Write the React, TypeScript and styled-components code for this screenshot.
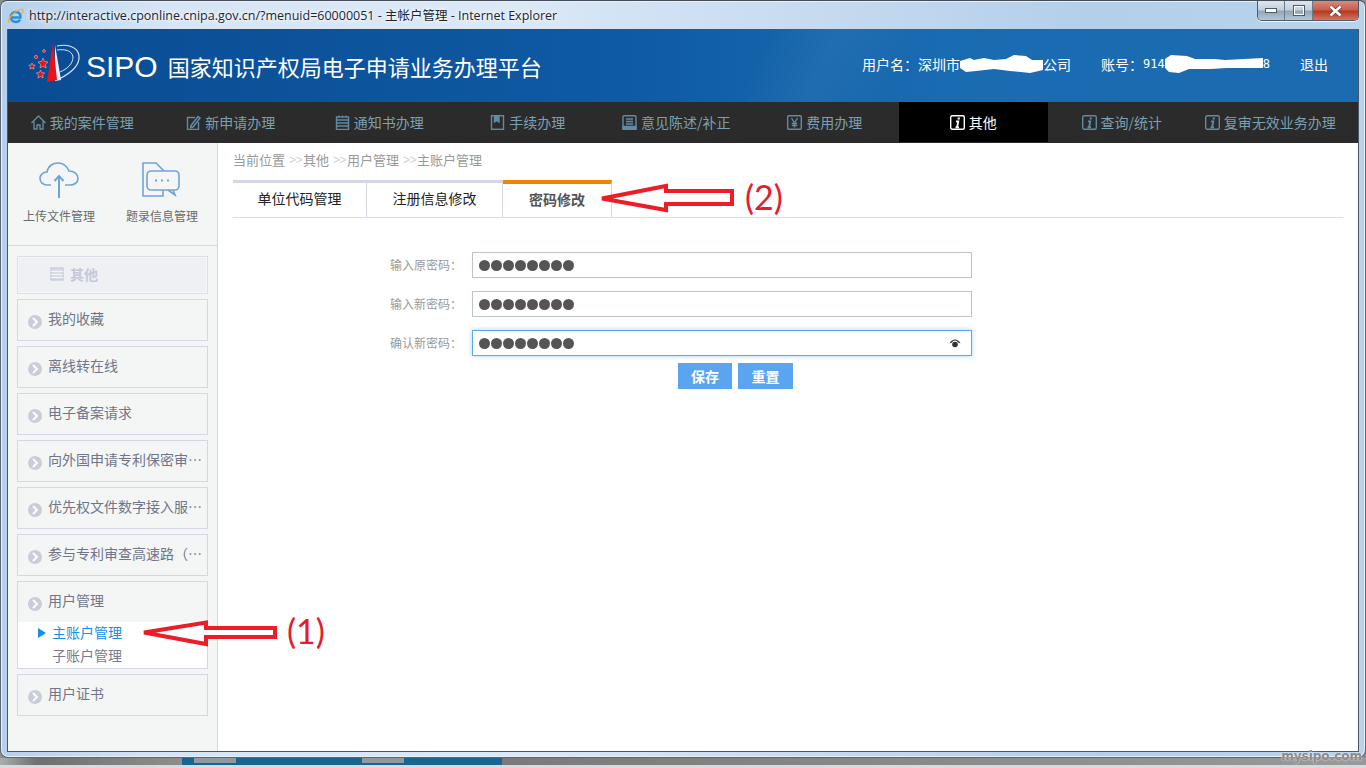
import styled, { createGlobalStyle } from 'styled-components'

const cjk = `"Noto Sans CJK SC", "Liberation Sans", sans-serif`

const GlobalStyle = createGlobalStyle`
    html, body {
        margin: 0;
        padding: 0;
        width: 1366px;
        height: 768px;
        overflow: hidden;
        font-family: ${cjk};
    }
    * {
        box-sizing: border-box;
    }
`

const Page = styled.div`
    position: relative;
    width: 1366px;
    height: 768px;
    overflow: hidden;
    display: flex;
    flex-direction: column;
    background: #8d8d8d;
`

const Window = styled.div`
    width: 1366px;
    height: 758px;
    display: flex;
    flex-direction: column;
    padding: 0 6px 5px 6px;
    border: 1px solid #5d6670;
    border-top: 1px solid #444d57;
    border-radius: 7px 7px 8px 8px;
    box-shadow: inset 0 0 0 1px #e8f1fa;
    background: linear-gradient(90deg, #b5d0ec 0%, #d6e5f5 12%, #dbe8f6 38%, #c6daf0 60%, #b3cfea 80%, #b9d3ec 100%);
`

const TitleBar = styled.div`
    height: 28px;
    flex: none;
    display: flex;
    align-items: flex-start;
`

const TitleText = styled.span`
    margin-left: 5px;
    margin-top: 6px;
    font-family: "Open Sans", "Noto Sans CJK SC", sans-serif;
    font-size: 12.5px;
    line-height: 18px;
    color: #1c2530;
    white-space: nowrap;
    text-shadow: 0 0 6px #fff, 0 0 3px #fff;
`

const IeIcon = styled.svg`
    width: 17px;
    height: 17px;
    margin-top: 7px;
    flex: none;
`

const Controls = styled.div`
    margin-left: auto;
    width: 102px;
    height: 20px;
    display: flex;
    border: 1px solid #4e5a68;
    border-top: none;
    border-radius: 0 0 5px 5px;
    overflow: hidden;
    box-shadow: 0 1px 0 #eef4fb;
`

const ControlButton = styled.div<{ $close?: boolean; $wide: number }>`
    width: ${(p) => p.$wide}px;
    display: flex;
    align-items: center;
    justify-content: center;
    border-right: 1px solid #6d7a88;
    background: ${(p) =>
        p.$close
            ? 'linear-gradient(180deg, #d98a7c 0%, #c6604e 45%, #b93a22 55%, #d3765f 100%)'
            : 'linear-gradient(180deg, #dde6f0 0%, #c3d0de 45%, #94a6b8 55%, #b4c5d6 100%)'};
    &:last-child {
        border-right: none;
    }
`

const Client = styled.div`
    flex: 1;
    min-height: 0;
    display: flex;
    flex-direction: column;
    border: 1px solid #4b5560;
    border-top: none;
    background: #fff;
`

const Header = styled.header`
    height: 73px;
    flex: none;
    display: flex;
    align-items: center;
    padding: 2px 30px 0 20px;
    color: #fff;
    background:
        linear-gradient(115deg, rgba(255, 255, 255, 0) 55%, rgba(255, 255, 255, 0.05) 60%, rgba(255, 255, 255, 0) 66%),
        linear-gradient(90deg, #0a4c93 0%, #0e5aa3 45%, #1a6cb2 70%, #1c6aaf 100%);
`

const Logo = styled.svg`
    width: 54px;
    height: 44px;
    flex: none;
    margin-top: -4px;
`

const Brand = styled.span`
    margin-left: 4px;
    font-family: "Liberation Sans", sans-serif;
    font-size: 30px;
    line-height: 36px;
`

const SiteName = styled.span`
    margin: 0 0 2px 10px;
    font-size: 22px;
    line-height: 34px;
    white-space: nowrap;
`

const UserInfo = styled.div`
    margin-left: auto;
    display: flex;
    align-items: center;
    gap: 30px;
    font-size: 14px;
    margin-top: -6px;
`

const InfoItem = styled.span`
    display: flex;
    align-items: center;
    white-space: nowrap;
`

const Mono = styled.span`
    font-family: "DejaVu Sans Mono", "Liberation Mono", monospace;
    font-size: 12px;
`

const Redact = styled.svg<{ $w: number }>`
    width: ${(p) => p.$w}px;
    height: 20px;
    flex: none;
`

const Nav = styled.nav`
    height: 41px;
    flex: none;
    display: grid;
    grid-template-columns: repeat(9, 148.5px);
    background: #2b2b2b;
`

const NavItem = styled.div<{ $active?: boolean }>`
    display: flex;
    align-items: center;
    justify-content: center;
    gap: 4px;
    height: 40px;
    font-size: 14px;
    white-space: nowrap;
    color: ${(p) => (p.$active ? '#fff' : '#7ba0b2')};
    background: ${(p) => (p.$active ? '#000' : 'transparent')};
    svg {
        width: 15px;
        height: 15px;
        flex: none;
    }
`

const Body = styled.div`
    flex: 1;
    min-height: 0;
    display: flex;
`

const Sidebar = styled.aside`
    width: 210px;
    flex: none;
    background: #f4f6f6;
    border-right: 1px solid #d3d6e2;
    display: flex;
    flex-direction: column;
`

const Shortcuts = styled.div`
    height: 103px;
    flex: none;
    display: flex;
    border-bottom: 1px solid #d6d9e3;
    padding-top: 18px;
`

const Shortcut = styled.div<{ $w: number }>`
    width: ${(p) => p.$w}px;
    display: flex;
    flex-direction: column;
    align-items: center;
    font-size: 12px;
    line-height: 18px;
    color: #6a6a6a;
    white-space: nowrap;
    svg {
        width: 42px;
        height: 38px;
        margin-bottom: 8px;
    }
`

const Menu = styled.div`
    display: flex;
    flex-direction: column;
    gap: 5px;
    padding: 10px 9px 0 9px;
`

const MenuHead = styled.div`
    height: 38px;
    display: flex;
    align-items: center;
    padding: 0 0 2px 32px;
    gap: 6px;
    font-size: 14px;
    font-weight: 700;
    color: #c4c9d7;
    background: #eef0f4;
    border: 1px solid #dcdfe8;
    box-shadow: inset 0 0 0 1px #f6f7f9;
    svg {
        width: 14px;
        height: 14px;
    }
`

const MenuBox = styled.div`
    border: 1px solid #d5d8e4;
`

const MenuRow = styled.div`
    height: 40px;
    display: flex;
    align-items: center;
    padding-left: 10px;
    font-size: 14px;
    color: #70758a;
`

const Bullet = styled.span`
    width: 14px;
    height: 14px;
    margin: 3px 6px 0 0;
    border-radius: 50%;
    background: #c8cdd9;
    flex: none;
    display: flex;
    align-items: center;
    justify-content: center;
`

const MenuLabel = styled.span`
    flex: 1;
    min-width: 0;
    padding-bottom: 4px;
    overflow: hidden;
    white-space: nowrap;
    text-overflow: ellipsis;
`

const SubMenu = styled.div`
    background: #fff;
    height: 46px;
    display: flex;
    flex-direction: column;
`

const SubItem = styled.div<{ $active?: boolean }>`
    height: 23px;
    display: flex;
    align-items: center;
    padding: 0 0 4px 34px;
    position: relative;
    font-size: 14px;
    color: ${(p) => (p.$active ? '#168fe6' : '#777b8c')};
    ${(p) =>
        p.$active &&
        `&::before {
            content: '';
            position: absolute;
            left: 20px;
            top: 6px;
            border-left: 8px solid #168fe6;
            border-top: 5px solid transparent;
            border-bottom: 5px solid transparent;
        }`}
`

const Main = styled.main`
    flex: 1;
    min-width: 0;
    padding: 0 15px;
`

const Breadcrumb = styled.div`
    height: 37px;
    display: flex;
    align-items: center;
    padding-bottom: 4px;
    font-size: 13px;
    color: #999;
    white-space: nowrap;
`

const CrumbSep = styled.span`
    margin: 0 1px 0 4px;
    font-family: "Liberation Sans", sans-serif;
    font-size: 12px;
    letter-spacing: -0.5px;
    color: #d2d2d2;
`

const Tabs = styled.div`
    height: 38px;
    display: flex;
    border-bottom: 1px solid #dedede;
`

const Tab = styled.div<{ $active?: boolean; $w: number }>`
    width: ${(p) => p.$w}px;
    height: 37px;
    display: flex;
    align-items: center;
    justify-content: center;
    padding-bottom: 4px;
    font-size: 14px;
    color: ${(p) => (p.$active ? '#555' : '#222')};
    font-weight: ${(p) => (p.$active ? 700 : 400)};
    border-top: ${(p) => (p.$active ? '4px solid #f08300' : '3px solid #d3d6e3')};
    border-right: 1px solid #d3d6e3;
`

const Form = styled.div`
    margin-top: 34px;
    display: flex;
    flex-direction: column;
    gap: 13px;
`

const FormRow = styled.div`
    display: flex;
    align-items: center;
`

const FieldLabel = styled.label`
    width: 239px;
    padding: 0 0 2px 157px;
    font-size: 12px;
    color: #999;
    white-space: nowrap;
`

const Field = styled.div<{ $focus?: boolean }>`
    position: relative;
    width: 500px;
    height: 26px;
    display: flex;
    align-items: center;
    gap: 1px;
    padding-left: 6px;
    background: #fff;
    border: 1px solid ${(p) => (p.$focus ? '#5aa9e6' : '#bcc1d3')};
    box-shadow: ${(p) => (p.$focus ? '0 0 5px rgba(90, 169, 230, 0.5)' : 'none')};
`

const Dot = styled.span`
    width: 11px;
    height: 11px;
    border-radius: 50%;
    background: #555;
    flex: none;
`

const Eye = styled.svg`
    position: absolute;
    right: 10px;
    top: 8px;
    width: 12px;
    height: 9px;
`

const Buttons = styled.div`
    display: flex;
    gap: 6px;
    margin: 7px 0 0 445px;
`

const Button = styled.button<{ $w: number }>`
    width: ${(p) => p.$w}px;
    height: 26px;
    padding: 0;
    border: none;
    background: #5aa5f0;
    color: #fff;
    font-family: ${cjk};
    font-size: 14px;
    font-weight: 700;
`

const Strip = styled.div`
    height: 10px;
    flex: none;
    display: flex;
    background: #d8dadc;
`

const StripShade = styled.div`
    width: 182px;
    height: 7px;
    background: linear-gradient(90deg, #a8aeb2 0%, #6f6f6f 20%, #8e8e8e 100%);
`

const StripTask = styled.div`
    width: 320px;
    height: 7px;
    display: flex;
    gap: 126px;
    padding-left: 12px;
    background: #19658f;
`

const StripChip = styled.span`
    width: 42px;
    height: 5px;
    background: #8e9aa3;
`

const StripRest = styled.div`
    flex: 1;
    height: 7px;
    background: linear-gradient(90deg, #7a7a7a, #9a9a9a);
`

const Watermark = styled.span`
    position: absolute;
    right: 4px;
    bottom: 5px;
    font-family: "DejaVu Sans", sans-serif;
    font-size: 12px;
    font-weight: 700;
    line-height: 14px;
    color: #8b8b8b;
    text-shadow: 0 0 2px #fff;
`

const ArrowLayer = styled.svg`
    position: absolute;
    left: 0;
    top: 0;
    width: 1366px;
    height: 768px;
    pointer-events: none;
`

const Callout = styled.span<{ $x: number; $y: number }>`
    position: absolute;
    left: ${(p) => p.$x}px;
    top: ${(p) => p.$y}px;
    font-family: Lato, "Open Sans", sans-serif;
    font-size: 34px;
    line-height: 36px;
    color: #e31e2c;
`

function NavIcon({ kind, color }: { kind: string; color: string }) {
    const common = { fill: 'none', stroke: color, strokeWidth: 1.4 }
    return (
        <svg viewBox="0 0 15 15">
            {kind === 'home' && <path {...common} d="M.5 8 7.5 1 14.500 8M3 6.500V14h3v-4h3v4h3V6.500" />}
            {kind === 'pen' && (
                <g {...common}>
                    <path d="M9 2.500H1.500V14.500h11V7" />
                    <path d="M5 10.500 12 1.500l2 1.500-7 9-2.200.6z" strokeWidth={1.6} />
                </g>
            )}
            {kind === 'note' && (
                <g {...common}>
                    <rect x="1.500" y="2" width="12" height="12.500" />
                    <path d="M1.500 5h12M1.500 8h12M1.500 11h12M4 .5v2M7.500.5v2M11 .5v2" />
                </g>
            )}
            {kind === 'book' && (
                <g {...common}>
                    <rect x="1.500" y=".7" width="12" height="13.600" />
                    <path d="M4.500 1v6l2.300-1.500L9 7V1" fill={color} />
                </g>
            )}
            {kind === 'doc' && (
                <g {...common}>
                    <rect x="1" y=".7" width="13" height="13.600" rx="1" />
                    <path d="M4 4h7M4 6.500h7M4 9h7" />
                    <path d="M1 11.500h13V14.300H1z" fill={color} />
                </g>
            )}
            {kind === 'yen' && (
                <g {...common}>
                    <rect x=".7" y=".7" width="13.600" height="13.600" rx="1" />
                    <path d="M4.500 3 7.500 8l3-5M7.500 8v4.500M4.800 8.500h5.400M4.800 10.500h5.400" />
                </g>
            )}
            {kind === 'info' && (
                <g {...common}>
                    <rect x=".7" y=".7" width="13.600" height="13.600" rx="1.500" />
                    <path d="M6 6.300h2.300l-1.200 6H5.500M7.100 12.300H9" strokeWidth={1.800} />
                    <path d="M7.800 2.600h2v2h-2.300z" fill={color} stroke="none" />
                </g>
            )}
        </svg>
    )
}

const navItems = [
    { kind: 'home', label: '我的案件管理' },
    { kind: 'pen', label: '新申请办理' },
    { kind: 'note', label: '通知书办理' },
    { kind: 'book', label: '手续办理' },
    { kind: 'doc', label: '意见陈述/补正' },
    { kind: 'yen', label: '费用办理' },
    { kind: 'info', label: '其他', active: true },
    { kind: 'info', label: '查询/统计' },
    { kind: 'info', label: '复审无效业务办理' },
]

const menuItems = [
    '我的收藏',
    '离线转在线',
    '电子备案请求',
    '向外国申请专利保密审查请求',
    '优先权文件数字接入服务请求',
    '参与专利审查高速路（PPH）',
]

function MenuEntry({ label }: { label: string }) {
    return (
        <MenuRow>
            <Bullet>
                <svg width="8" height="10" viewBox="0 0 8 10">
                    <path d="M2 1l4 4-4 4" fill="none" stroke="#fff" strokeWidth="2" />
                </svg>
            </Bullet>
            <MenuLabel>{label}</MenuLabel>
        </MenuRow>
    )
}

function PasswordField({ label, focus }: { label: string; focus?: boolean }) {
    return (
        <FormRow>
            <FieldLabel>{label}</FieldLabel>
            <Field $focus={focus}>
                {Array.from({ length: 8 }).map((_, i) => (
                    <Dot key={i} />
                ))}
                {focus && (
                    <Eye viewBox="0 0 12 9">
                        <path d="M0.500 4.500C2 1.500 4 .5 6 .5s4 1 5.500 4L9 3.500a3.200 3.200 0 0 0-6 0z" fill="#333" />
                        <circle cx="6" cy="5.500" r="2.800" fill="#333" />
                    </Eye>
                )}
            </Field>
        </FormRow>
    )
}

function Arrow({ points }: { points: string }) {
    return <polygon points={points} fill="#fff" stroke="#ee1c25" strokeWidth="4" strokeLinejoin="miter" />
}

export default function App() {
    return (
        <Page>
            <GlobalStyle />
            <Window>
                <TitleBar>
                    <IeIcon viewBox="0 0 17 17">
                        <path d="M4 9.500h9.500C13.500 6 11.500 4 8.800 4 6 4 3.800 6.200 3.800 9S6 14 8.800 14c2 0 3.500-1 4.200-2.500" fill="none" stroke="#2a8fdc" strokeWidth="2.400" />
                        <path d="M2 15C0 12 6 3 15 1c1.800.8 1 3-.5 5" fill="none" stroke="#f0b030" strokeWidth="1.200" />
                    </IeIcon>
                    <TitleText>http://interactive.cponline.cnipa.gov.cn/?menuid=60000051 - 主帐户管理 - Internet Explorer</TitleText>
                    <Controls>
                        <ControlButton $wide={28}>
                            <svg width="12" height="5" viewBox="0 0 12 5">
                                <rect x="0.500" y="0.500" width="11" height="4" fill="#fff" stroke="#4c5a68" />
                            </svg>
                        </ControlButton>
                        <ControlButton $wide={28}>
                            <svg width="12" height="11" viewBox="0 0 12 11">
                                <rect x="1" y="1" width="10" height="9" fill="none" stroke="#fff" strokeWidth="2" />
                                <rect x="0.500" y="0.500" width="11" height="10" fill="none" stroke="#4c5a68" />
                            </svg>
                        </ControlButton>
                        <ControlButton $close $wide={46}>
                            <svg width="15" height="12" viewBox="0 0 15 12">
                                <path d="M2.500 1.500 12.500 10.500M12.500 1.500 2.500 10.500" stroke="#5a3a34" strokeWidth="4" />
                                <path d="M2.500 1.500 12.500 10.500M12.500 1.500 2.500 10.500" stroke="#fff" strokeWidth="2.600" />
                            </svg>
                        </ControlButton>
                    </Controls>
                </TitleBar>
                <Client>
                    <Header>
                        <Logo viewBox="0 0 54 44">
                            <path d="M29 3C38 1 50 3 51 13c1 10-8 17-20 23" fill="none" stroke="#d6e4f2" strokeWidth="1.200" />
                            <path d="M29 7C36 6 44 7 45 14c0 7-6 12-13 15" fill="none" stroke="#d6e4f2" strokeWidth="1" />
                            <path d="M27 2 33 37 27 38z" fill="#eaf2fa" />
                            <path d="M25 0 L29 37 L19 39 Z" fill="#e8111d" />
                            <path d="M15 15l1.500 3.500 3.500.5-2.600 2.500.8 3.500-3.200-1.800-3 1.800.6-3.500L10 19l3.500-.5z" fill="#e8111d" stroke="#f5d5d5" strokeWidth=".5" />
                            <path d="M12.500 27l1.200 2.700 3 .3-2.200 2 .6 3-2.600-1.500-2.600 1.500.6-3-2.200-2 3-.3z" fill="#e8111d" stroke="#f5d5d5" strokeWidth=".5" />
                            <path d="M4 20l1 2 2.200.3-1.600 1.500.4 2.200-2-1-2 1 .4-2.200L.8 22.300 3 22z" fill="#e8111d" stroke="#f5d5d5" strokeWidth=".5" />
                            <circle cx="8" cy="14" r="1.600" fill="#e8111d" stroke="#f5d5d5" strokeWidth=".5" />
                            <circle cx="16" cy="8" r="1.400" fill="#e8111d" stroke="#f5d5d5" strokeWidth=".5" />
                        </Logo>
                        <Brand>SIPO</Brand>
                        <SiteName>国家知识产权局电子申请业务办理平台</SiteName>
                        <UserInfo>
                            <InfoItem>
                                用户名：深圳市
                                <Redact $w={83} viewBox="0 0 83 20">
                                    <path d="M0 7 10 4 14 6 24 4 34 6 46 5 54 1 66 2 72 6 83 6 83 16 70 19 50 17 34 15 16 17 6 18 0 14z" fill="#fff" />
                                </Redact>
                                公司
                            </InfoItem>
                            <InfoItem>
                                账号：<Mono>914</Mono>
                                <Redact $w={98} viewBox="0 0 98 20">
                                    <path d="M0 5 6 1 22 2 30 5 50 5 60 6 98 4 98 14 62 14 46 15 24 15 14 19 4 18 0 14z" fill="#fff" />
                                </Redact>
                                <Mono>8</Mono>
                            </InfoItem>
                            <InfoItem>退出</InfoItem>
                        </UserInfo>
                    </Header>
                    <Nav>
                        {navItems.map((item) => (
                            <NavItem key={item.label} $active={item.active}>
                                <NavIcon kind={item.kind} color={item.active ? '#fff' : '#5f8ba3'} />
                                {item.label}
                            </NavItem>
                        ))}
                    </Nav>
                    <Body>
                        <Sidebar>
                            <Shortcuts>
                                <Shortcut $w={102}>
                                    <svg viewBox="0 0 42 38" fill="none" stroke="#6fa4d9" strokeWidth="1.600">
                                        <path d="M13 24H9C5 24 2 21 2 17.500S5 11 9 11c1-6 6-9 11-9 5 0 9 3 11 8 5 0 9 3 9 7.500 0 4-3.500 6.500-8 6.500h-5" />
                                        <path d="M21 37V15M16.500 20l4.500-5 4.500 5" strokeWidth="2" />
                                    </svg>
                                    上传文件管理
                                </Shortcut>
                                <Shortcut $w={104}>
                                    <svg viewBox="0 0 42 38" fill="none" stroke="#6fa4d9" strokeWidth="1.600">
                                        <path d="M23 10 15 2H2v33h20v-6" />
                                        <rect x="6" y="10" width="32" height="19" rx="4" fill="#f4f6f6" />
                                        <path d="M27 29l7 5-2-5" />
                                        <path d="M14 19.500h2M20 19.500h2M26 19.500h2" strokeWidth="2" />
                                    </svg>
                                    题录信息管理
                                </Shortcut>
                            </Shortcuts>
                            <Menu>
                                <MenuHead>
                                    <svg viewBox="0 0 14 14" fill="none" stroke="#c4c9d7" strokeWidth="1.200">
                                        <rect x="1" y="1" width="12" height="12" fill="#d8dce6" />
                                        <path d="M1 4.500h12M1 7.500h12M1 10.500h12" stroke="#f4f6f6" />
                                    </svg>
                                    其他
                                </MenuHead>
                                {menuItems.map((label) => (
                                    <MenuBox key={label}>
                                        <MenuEntry label={label} />
                                    </MenuBox>
                                ))}
                                <MenuBox>
                                    <MenuEntry label="用户管理" />
                                    <SubMenu>
                                        <SubItem $active>主账户管理</SubItem>
                                        <SubItem>子账户管理</SubItem>
                                    </SubMenu>
                                </MenuBox>
                                <MenuBox>
                                    <MenuEntry label="用户证书" />
                                </MenuBox>
                            </Menu>
                        </Sidebar>
                        <Main>
                            <Breadcrumb>
                                当前位置
                                <CrumbSep>&gt;&gt;</CrumbSep>其他
                                <CrumbSep>&gt;&gt;</CrumbSep>用户管理
                                <CrumbSep>&gt;&gt;</CrumbSep>主账户管理
                            </Breadcrumb>
                            <Tabs>
                                <Tab $w={134}>单位代码管理</Tab>
                                <Tab $w={136}>注册信息修改</Tab>
                                <Tab $w={109} $active>
                                    密码修改
                                </Tab>
                            </Tabs>
                            <Form>
                                <PasswordField label="输入原密码：" />
                                <PasswordField label="输入新密码：" />
                                <PasswordField label="确认新密码：" focus />
                            </Form>
                            <Buttons>
                                <Button $w={54}>保存</Button>
                                <Button $w={55}>重置</Button>
                            </Buttons>
                        </Main>
                    </Body>
                </Client>
            </Window>
            <Strip>
                <StripShade />
                <StripTask>
                    <StripChip />
                    <StripChip />
                </StripTask>
                <StripRest />
            </Strip>
            <ArrowLayer viewBox="0 0 1366 768">
                <Arrow points="144,632.500 206,622.500 206,628 275,628 275,637 206,637 206,644" />
                <Arrow points="602,198.500 666,186 666,191 732,191 732,204 666,204 666,210" />
            </ArrowLayer>
            <Callout $x={287} $y={613}>(1)</Callout>
            <Callout $x={745} $y={179}>(2)</Callout>
            <Watermark>mysipo.com</Watermark>
        </Page>
    )
}
